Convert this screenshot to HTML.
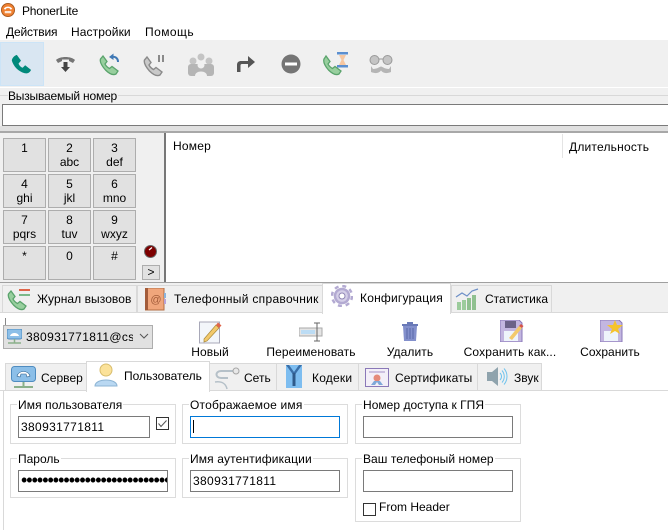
<!DOCTYPE html>
<html><head><meta charset="utf-8"><style>
html,body{margin:0;padding:0;background:#fff}
#r{position:relative;width:668px;height:530px;overflow:hidden;background:#fff;font-family:"Liberation Sans",sans-serif;font-size:12px;color:#000;letter-spacing:.1px}
#r div,#r svg{position:absolute;box-sizing:border-box}
.t{white-space:nowrap;line-height:14px}
.c{text-align:center;transform:translateX(-50%)}
.k{width:43px;height:34px;background:#e1e1e1;border:1px solid #adadad;text-align:center;line-height:14px;padding-top:2px;letter-spacing:0}
.tab{background:#f0f0f0;border:1px solid #d9d9d9;border-bottom:0}
.act{background:#fff;border:1px solid #d9d9d9;border-bottom:0}
.g{border:1px solid #dcdcdc;background:#fff}
.i{border:1px solid #7a7a7a;background:#fff;height:22px;line-height:20px;padding-left:2px;letter-spacing:.35px}
.l{background:#fff;padding:0 1px;white-space:nowrap;line-height:14px}
</style></head><body><div id="r">

<svg style="left:1px;top:3px" width="14" height="14" viewBox="0 0 15 15"><circle cx="7.500" cy="7.500" r="7" fill="#f08030" stroke="#a85a20"/><path d="M3 6.500C4 3 11 3 12 6.500L10 7 9 5.500H6L5 7Z" fill="#fff"/><rect x="4" y="8.500" width="7" height="2.500" fill="#fff" opacity=".8"/></svg>
<div class="t" style="left:22px;top:4px;letter-spacing:-.2px">PhonerLite</div>
<div class="t" style="left:6px;top:25px;letter-spacing:-.15px">Действия</div>
<div class="t" style="left:71px;top:25px">Настройки</div>
<div class="t" style="left:145px;top:25px;letter-spacing:.45px">Помощь</div>

<div style="left:0;top:40px;width:668px;height:47px;background:#f0f0f0"></div>
<div style="left:0;top:42px;width:44px;height:44px;background:#d9e6f2;border:1px solid #cce4f7"></div>
<div style="left:0;top:88px;width:668px;height:43px;background:#f0f0f0"></div>

<svg style="left:11px;top:54px" width="20" height="20" viewBox="0 0 24 24"><path d="M7 1L12 8 9 11.500C10 14 11.500 15.500 14 16.500L17 13.500 24 19C23 22 20 24 16 23 9 21 3 15 1 8 1 5 4 2 7 1Z" fill="#00897b"/></svg>
<svg style="left:55px;top:54px" width="21" height="20" viewBox="0 0 21 20"><path d="M1 6C5 2 16 2 20 6L18 9 14 7V5.500H7V7L3 9Z" fill="#757575"/><path d="M8.500 8H12.500V13H15L10.500 18 6 13H8.500Z" fill="#444"/></svg>
<svg style="left:98px;top:52px" width="25" height="25" viewBox="0 0 25 25"><path d="M5 4L9 9.500 7 12C8 14 9.500 15.500 11.500 16.500L14 14.500 20 19 18 22C15 23.500 11 21.500 7.500 18 4 14 1.500 10 2.500 7Z" fill="#98cf9e" stroke="#5aa36c" stroke-width="1.300"/><path d="M13 5C17 4 20 6 20 10" fill="none" stroke="#3f78b5" stroke-width="2"/><path d="M11 5L15.500 1.500V8Z" fill="#3f78b5"/></svg>
<svg style="left:143px;top:53px" width="25" height="25" viewBox="0 0 25 25"><path d="M4 4L8 9.500 6 12C7 14 8.500 15.500 10.500 16.500L13 14.500 19 19 17 22C14 23.500 10 21.500 6.500 18 3 14 .5 10 1.500 7Z" fill="#c9c9c9" stroke="#8a8a8a" stroke-width="1.400"/><rect x="15" y="2" width="2" height="7" fill="#8a8a8a"/><rect x="19" y="2" width="2" height="7" fill="#8a8a8a"/></svg>
<svg style="left:188px;top:52px" width="26" height="25" viewBox="0 0 26 25"><circle cx="5" cy="9" r="3.500" fill="#c4c4c4"/><circle cx="21" cy="9" r="3.500" fill="#c4c4c4"/><circle cx="13" cy="5" r="3.500" fill="#c4c4c4"/><rect x="0" y="12" width="26" height="12" rx="3" fill="#b5b5b5"/><circle cx="13" cy="13" r="3.500" fill="#f0f0f0"/><path d="M7 24C7 18 19 18 19 24Z" fill="#f0f0f0"/></svg>
<svg style="left:236px;top:55px" width="20" height="18" viewBox="0 0 20 18"><path d="M1 17V10C1 7 3 6 5 6H12V1L19 7 12 13V9H6C5 9 4.500 9.500 4.500 10.500V17Z" fill="#555"/></svg>
<svg style="left:281px;top:54px" width="20" height="20" viewBox="0 0 20 20"><circle cx="10" cy="10" r="9.500" fill="#757575"/><rect x="4" y="8.500" width="12" height="3" fill="#fff"/></svg>
<svg style="left:323px;top:51px" width="27" height="26" viewBox="0 0 27 26"><path d="M3 5L7 10.500 5 13C6 15 7.500 16.500 9.500 17.500L12 15.500 18 20 16 23C13 24.500 9 22.500 5.500 19 2 15 0 11 1 8Z" fill="#98cf9e" stroke="#5aa36c" stroke-width="1.300"/><rect x="14" y="1" width="11" height="2.500" fill="#5b8fd0"/><rect x="14" y="14" width="11" height="2.500" fill="#5b8fd0"/><path d="M16 4H23L20.500 9 23 14H16L18.500 9Z" fill="#f6c6a0"/></svg>
<svg style="left:369px;top:55px" width="24" height="19" viewBox="0 0 24 19"><circle cx="5.500" cy="5" r="4.500" fill="#c4c4c4" stroke="#999"/><circle cx="18.500" cy="5" r="4.500" fill="#c4c4c4" stroke="#999"/><path d="M10 4H14" stroke="#999"/><path d="M2 11V17C7 19 10 18 12 15.500 14 18 17 19 22 17V11L20 14C16 14 14 12 12 11.500 10 12 8 14 4 14Z" fill="#b5b5b5"/></svg>

<div style="left:0;top:95px;width:668px;height:1px;background:#d8d8d8"></div>
<div class="t" style="left:8px;top:89px;background:#f0f0f0;padding-right:1px;letter-spacing:-.2px">Вызываемый номер</div>
<div style="left:2px;top:104px;width:666px;height:22px;background:#fff;border:1px solid #7a7a7a;border-right:0"></div>
<div style="left:0;top:126px;width:668px;height:5px;background:#e0e0e0"></div>
<div style="left:0;top:131px;width:668px;height:2px;background:#a8a8a8"></div>

<div style="left:0;top:133px;width:165px;height:149px;background:#f0f0f0"></div>
<div class="k" style="left:3px;top:138px">1</div>
<div class="k" style="left:48px;top:138px">2<br>abc</div>
<div class="k" style="left:93px;top:138px">3<br>def</div>
<div class="k" style="left:3px;top:174px">4<br>ghi</div>
<div class="k" style="left:48px;top:174px">5<br>jkl</div>
<div class="k" style="left:93px;top:174px">6<br>mno</div>
<div class="k" style="left:3px;top:210px">7<br>pqrs</div>
<div class="k" style="left:48px;top:210px">8<br>tuv</div>
<div class="k" style="left:93px;top:210px">9<br>wxyz</div>
<div class="k" style="left:3px;top:246px">*</div>
<div class="k" style="left:48px;top:246px">0</div>
<div class="k" style="left:93px;top:246px">#</div>
<svg style="left:144px;top:245px" width="13" height="13" viewBox="0 0 13 13"><circle cx="6.500" cy="6.500" r="6" fill="#7d0000" stroke="#666"/><path d="M5 5L8 2.500" stroke="#fff" stroke-width="1.200"/></svg>
<div style="left:142px;top:265px;width:18px;height:15px;background:#e1e1e1;border:1px solid #adadad;text-align:center;line-height:13px">&gt;</div>

<div style="left:164px;top:133px;width:2px;height:149px;background:#777"></div>
<div class="t" style="left:173px;top:139px;letter-spacing:.2px">Номер</div>
<div style="left:562px;top:134px;width:1px;height:24px;background:#e4e4e4"></div>
<div class="t" style="left:569px;top:140px;letter-spacing:.2px">Длительность</div>

<div style="left:0;top:282px;width:668px;height:31px;background:#f0f0f0;border-top:1px solid #a0a0a0;border-bottom:1px solid #d9d9d9"></div>
<div class="tab" style="left:2px;top:285px;width:135px;height:27px"></div>
<svg style="left:7px;top:287px" width="24" height="24" viewBox="0 0 24 24"><path d="M4 4L8 9.500 6 12C7 14 8.500 15.500 10.500 16.500L13 14.500 19 19 17 22C14 23.500 10 21.500 6.500 18 3 14 .5 10 1.500 7Z" fill="#98cf9e" stroke="#5aa36c" stroke-width="1.300"/><path d="M12 3H23" stroke="#e0654a" stroke-width="2"/><path d="M12 8H23" stroke="#7cb98a" stroke-width="2"/></svg>
<div class="t" style="left:37px;top:292px;letter-spacing:.07px">Журнал вызовов</div>
<div class="tab" style="left:137px;top:285px;width:186px;height:27px"></div>
<svg style="left:145px;top:288px" width="22" height="23" viewBox="0 0 22 23"><rect x="0" y="0" width="19" height="22" fill="#f0a67c" stroke="#b56e45"/><rect x="0" y="0" width="3" height="22" fill="#a35c3a"/><rect x="19" y="5" width="2" height="5" fill="#8bb4dc"/><rect x="19" y="11" width="2" height="5" fill="#b8a3d8"/><text x="11" y="15" font-size="11" text-anchor="middle" fill="#a35c3a" font-family="Liberation Sans">@</text></svg>
<div class="t" style="left:174px;top:292px;letter-spacing:.3px">Телефонный справочник</div>
<div class="act" style="left:322px;top:283px;width:129px;height:31px"></div>
<svg style="left:331px;top:285px" width="22" height="22" viewBox="0 0 22 22"><circle cx="11" cy="11" r="7" fill="#d5cfe8" stroke="#b3aad2" stroke-width="2.500"/><circle cx="11" cy="11" r="10" fill="none" stroke="#b3aad2" stroke-width="2.500" stroke-dasharray="4 3.850"/><circle cx="11" cy="11" r="3" fill="#fff" stroke="#8f86b5"/></svg>
<div class="t" style="left:360px;top:291px;letter-spacing:.2px">Конфигурация</div>
<div class="tab" style="left:451px;top:285px;width:101px;height:27px"></div>
<svg style="left:455px;top:287px" width="24" height="24" viewBox="0 0 24 24"><path d="M1 10L7 6 12 9 17 4 23 2" fill="none" stroke="#6d8fc7" stroke-width="1.200"/><rect x="2" y="15" width="4" height="8" fill="#9ccc9c"/><rect x="7" y="13" width="4" height="10" fill="#9ccc9c"/><rect x="12" y="11" width="4" height="12" fill="#8fc08f"/><rect x="17" y="8" width="4" height="15" fill="#8fc08f"/></svg>
<div class="t" style="left:485px;top:292px;letter-spacing:0">Статистика</div>

<div style="left:5px;top:318px;width:1px;height:8px;background:#888"></div>
<div style="left:3px;top:325px;width:150px;height:24px;background:#e1e1e1;border:1px solid #adadad"></div>
<svg style="left:7px;top:329px" width="15" height="16" viewBox="0 0 15 16"><rect x="0" y="0" width="15" height="10" rx="2" fill="#8cbfe8" stroke="#4f8cc0"/><path d="M3 7C4 3 11 3 12 7Z" fill="#fff"/><path d="M7.500 10V14M1 14H14" stroke="#8ab08a" stroke-width="1.500"/></svg>
<div class="t" style="left:26px;top:330px;width:107px;overflow:hidden;letter-spacing:.35px">380931771811@cs</div>
<svg style="left:139px;top:333px" width="10" height="7" viewBox="0 0 10 7"><path d="M1 1L5 5 9 1" fill="none" stroke="#555"/></svg>

<svg style="left:199px;top:320px" width="24" height="24" viewBox="0 0 24 24"><rect x=".5" y="2" width="20" height="21" fill="#f3f6fa" stroke="#a8a8b8"/><path d="M5 19L17 5 20 8 8 21 5 22Z" fill="#f3c96b" stroke="#a88a3c" stroke-width=".7"/><path d="M17 5L19 2.500 22.500 5.500 20 8Z" fill="#e0654a"/></svg>
<div class="t c" style="left:210px;top:345px">Новый</div>
<svg style="left:299px;top:322px" width="24" height="20" viewBox="0 0 24 20"><rect x="0" y="6" width="23" height="8" fill="#e4e4e4" stroke="#aaa"/><rect x="2" y="8" width="14" height="4" fill="#bcdcf4"/><path d="M15 1H21M18 1V19M15 19H21" stroke="#666" fill="none"/></svg>
<div class="t c" style="left:311px;top:345px">Переименовать</div>
<svg style="left:402px;top:321px" width="16" height="20" viewBox="0 0 16 20"><rect x="0" y="3" width="16" height="2" fill="#6a7ab8"/><rect x="5" y="1" width="6" height="2" fill="#6a7ab8"/><path d="M1 5H15L14 20H2Z" fill="#8390cc"/><path d="M5 7V18M8 7V18M11 7V18" stroke="#5a68a8"/></svg>
<div class="t c" style="left:410px;top:345px">Удалить</div>
<svg style="left:500px;top:320px" width="24" height="22" viewBox="0 0 24 22"><path d="M0 0H19L22 3V22H0Z" fill="#c3b6e0" stroke="#8a78b8"/><rect x="5" y="1" width="11" height="7" fill="#6b6288"/><rect x="4" y="11" width="14" height="10" fill="#eef4fb"/><path d="M9 18L19 6 22 8 12 20Z" fill="#f3c96b"/><path d="M19 6L21 4 23.500 6 22 8Z" fill="#d4534a"/></svg>
<div class="t c" style="left:510px;top:345px;letter-spacing:.15px">Сохранить как...</div>
<svg style="left:600px;top:320px" width="24" height="22" viewBox="0 0 24 22"><path d="M0 0H19L22 3V22H0Z" fill="#c3b6e0" stroke="#8a78b8"/><rect x="4" y="11" width="14" height="10" fill="#eef4fb"/><path d="M15 0L17 5 23 5 18 9 20 14 15 11 10 14 12 9 7 5 13 5Z" fill="#f5c32c"/></svg>
<div class="t c" style="left:610px;top:345px;letter-spacing:0">Сохранить</div>

<div style="left:0;top:390px;width:668px;height:1px;background:#d9d9d9"></div>
<div style="left:3px;top:390px;width:1px;height:140px;background:#d9d9d9"></div>
<div class="tab" style="left:5px;top:363px;width:82px;height:27px"></div>
<svg style="left:11px;top:366px" width="25" height="23" viewBox="0 0 25 23"><rect x=".5" y=".5" width="24" height="15" rx="3" fill="#8cbfe8" stroke="#4f8cc0"/><path d="M6 10C8 4 17 4 19 10L16 11 15 8H10L9 11Z" fill="#fff" stroke="#2d5f8c" stroke-width=".6"/><path d="M12.500 16V21M3 21H22" stroke="#8ab08a" stroke-width="2"/></svg>
<div class="t" style="left:41px;top:371px;letter-spacing:.05px">Сервер</div>
<div class="act" style="left:86px;top:361px;width:124px;height:31px"></div>
<svg style="left:94px;top:363px" width="24" height="24" viewBox="0 0 24 24"><circle cx="12" cy="7" r="6" fill="#fbe29a" stroke="#d8bd6d"/><path d="M1 23C1 15 23 15 23 23Z" fill="#b9d8f2" stroke="#8db4d4"/></svg>
<div class="t" style="left:124px;top:369px;letter-spacing:0">Пользователь</div>
<div class="tab" style="left:209px;top:363px;width:68px;height:27px"></div>
<svg style="left:214px;top:366px" width="26" height="24" viewBox="0 0 26 24"><path d="M22 5H7C1 5 1 12 7 12H14" fill="none" stroke="#b5c0c8" stroke-width="2"/><circle cx="22" cy="5" r="3" fill="#e8e8e8" stroke="#a5a5a5"/><path d="M1 16C8 15 12 18 13 23" fill="none" stroke="#b5c0c8" stroke-width="1.500"/></svg>
<div class="t" style="left:244px;top:371px;letter-spacing:0">Сеть</div>
<div class="tab" style="left:276px;top:363px;width:83px;height:27px"></div>
<svg style="left:286px;top:365px" width="16" height="23" viewBox="0 0 16 23"><rect width="16" height="23" fill="#7dbdf0"/><path d="M0 0L8 11 16 0H13L8 7 3 0Z" fill="#3a6fa8"/><path d="M8 8V21" stroke="#2f5a8a" stroke-width="3"/></svg>
<div class="t" style="left:312px;top:371px;letter-spacing:.2px">Кодеки</div>
<div class="tab" style="left:358px;top:363px;width:120px;height:27px"></div>
<svg style="left:365px;top:368px" width="24" height="19" viewBox="0 0 24 19"><rect x=".5" y=".5" width="23" height="18" fill="#f3eff8" stroke="#8a78b8"/><path d="M4 4H20" stroke="#a592c8"/><circle cx="12" cy="10" r="3.500" fill="#e58a7a"/><path d="M9 13L6 17H10L12 14 14 17H18L15 13Z" fill="#7fa8d8"/></svg>
<div class="t" style="left:395px;top:371px;letter-spacing:.07px">Сертификаты</div>
<div class="tab" style="left:477px;top:363px;width:65px;height:27px"></div>
<svg style="left:486px;top:366px" width="22" height="21" viewBox="0 0 22 21"><path d="M1 6H6L12 1V20L6 15H1Z" fill="#8fa3ad"/><path d="M14 7C16 9 16 12 14 14M16 4.500C19 8 19 13 16 16.500M18 2.500C22 7 22 14 18 18.500" fill="none" stroke="#6fc3ee"/></svg>
<div class="t" style="left:514px;top:371px;letter-spacing:0">Звук</div>

<div class="g" style="left:10px;top:404px;width:166px;height:40px"></div>
<div class="l" style="left:17px;top:398px">Имя пользователя</div>
<div class="i" style="left:18px;top:416px;width:132px">380931771811</div>
<div style="left:156px;top:417px;width:13px;height:13px;border:1px solid #333;background:#fff"></div>
<svg style="left:156px;top:417px" width="13" height="13" viewBox="0 0 13 13"><path d="M2.500 6.500L5 9.500 10.500 3.500" fill="none" stroke="#555"/></svg>

<div class="g" style="left:182px;top:404px;width:166px;height:40px"></div>
<div class="l" style="left:189px;top:398px;letter-spacing:.2px">Отображаемое имя</div>
<div class="i" style="left:190px;top:416px;width:150px;border-color:#0078d7"></div>
<div style="left:193px;top:420px;width:1px;height:13px;background:#000"></div>

<div class="g" style="left:355px;top:404px;width:166px;height:40px"></div>
<div class="l" style="left:362px;top:398px;letter-spacing:.03px">Номер доступа к ГПЯ</div>
<div class="i" style="left:363px;top:416px;width:150px"></div>

<div class="g" style="left:10px;top:458px;width:166px;height:40px"></div>
<div class="l" style="left:17px;top:452px;letter-spacing:0">Пароль</div>
<div class="i" style="left:18px;top:470px;width:150px;overflow:hidden;white-space:nowrap;font-size:18px;letter-spacing:-1px;line-height:19px;padding-left:2px">••••••••••••••••••••••••••••••</div>

<div class="g" style="left:182px;top:458px;width:166px;height:40px"></div>
<div class="l" style="left:189px;top:452px;letter-spacing:.15px">Имя аутентификации</div>
<div class="i" style="left:190px;top:470px;width:150px">380931771811</div>

<div class="g" style="left:355px;top:458px;width:166px;height:64px"></div>
<div class="l" style="left:362px;top:452px;letter-spacing:.05px">Ваш телефоный номер</div>
<div class="i" style="left:363px;top:470px;width:150px"></div>
<div style="left:363px;top:503px;width:13px;height:13px;border:1px solid #333;background:#fff"></div>
<div class="t" style="left:379px;top:500px;letter-spacing:0">From Header</div>

</div></body></html>
